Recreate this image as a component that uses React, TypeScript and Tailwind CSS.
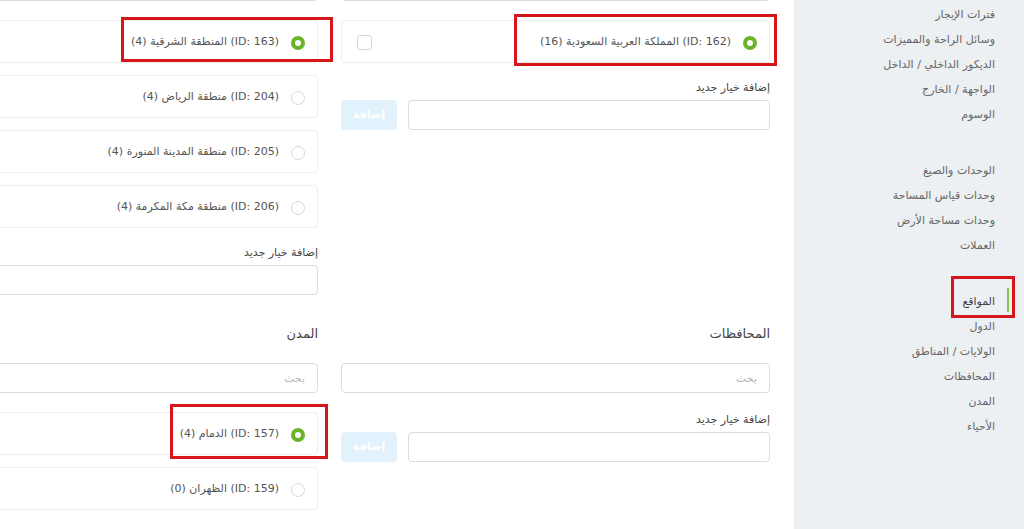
import React from "react";

type Opt = { id: number; name: string; count: number; checked?: boolean };

type Col = {
  title: string;
  options: Opt[];
};

const sideGroups: { label: string; active?: boolean }[][] = [
  [
    { label: "فترات الإيجار" },
    { label: "وسائل الراحة والمميزات" },
    { label: "الديكور الداخلي / الداخل" },
    { label: "الواجهة / الخارج" },
    { label: "الوسوم" },
  ],
  [
    { label: "الوحدات والصيغ" },
    { label: "وحدات قياس المساحة" },
    { label: "وحدات مساحة الأرض" },
    { label: "العملات" },
  ],
  [
    { label: "المواقع", active: true },
    { label: "الدول" },
    { label: "الولايات / المناطق" },
    { label: "المحافظات" },
    { label: "المدن" },
    { label: "الأحياء" },
  ],
];

const cols: Col[] = [
  {
    title: "الدول",
    options: [{ id: 162, name: "المملكة العربية السعودية", count: 16, checked: true }],
  },
  {
    title: "الولايات / المناطق",
    options: [
      { id: 163, name: "المنطقة الشرقية", count: 4, checked: true },
      { id: 204, name: "منطقة الرياض", count: 4 },
      { id: 205, name: "منطقة المدينة المنورة", count: 4 },
      { id: 206, name: "منطقة مكة المكرمة", count: 4 },
    ],
  },
  { title: "المحافظات", options: [] },
  {
    title: "المدن",
    options: [
      { id: 157, name: "الدمام", count: 4, checked: true },
      { id: 159, name: "الظهران", count: 0 },
    ],
  },
];

function Radio({ on }: { on?: boolean }) {
  if (on) {
    return <span className="h-[14px] w-[14px] shrink-0 rounded-full border-[4px] border-[#6ab42a] bg-white" />;
  }
  return <span className="h-[14px] w-[14px] shrink-0 rounded-full border border-[#d9d9d9] bg-white" />;
}

function Column({ col }: { col: Col }) {
  const has = col.options.length > 0;
  return (
    <div className="flex flex-col">
      <div className="h-[20px] text-[13px] leading-[20px] text-[#444]">{col.title}</div>
      <input
        placeholder="بحث"
        className="mt-[19px] h-[30px] rounded-[4px] border border-[#dcdcdc] px-[12px] text-[11px] placeholder:text-[#b5b5b5] outline-none"
      />
      {has && (
        <div className="mt-[19px] flex flex-col gap-[12px]">
          {col.options.map((o) => (
            <div
              key={o.id}
              className="flex h-[43px] items-center rounded-[4px] border border-[#eeeeee] bg-white pl-[15px] pr-[12px] pt-[2px]"
            >
              <Radio on={o.checked} />
              <span className="mr-[12px] whitespace-nowrap text-[11px] text-[#555]">
                {`(ID: ${o.id}) ${o.name} (${o.count})`}
              </span>
              <span className="mr-auto h-[15px] w-[15px] shrink-0 rounded-[3px] border border-[#d6d6d6]" />
            </div>
          ))}
        </div>
      )}
      <div className={has ? "mt-[18px]" : "mt-[20px]"}>
        <div className="mb-[5px] h-[14px] text-[11px] leading-[14px] text-[#444]">إضافة خيار جديد</div>
        <div className="flex gap-[11px]">
          <input className="h-[30px] flex-1 rounded-[4px] border border-[#dcdcdc] px-[12px] text-[11px] outline-none" />
          <button className="h-[30px] w-[56px] rounded-[4px] bg-[#e2f2fc] text-[11px] font-bold text-white">
            إضافة
          </button>
        </div>
      </div>
    </div>
  );
}

export default function App() {
  return (
    <div
      dir="rtl"
      className="relative flex h-[529px] w-[1024px] overflow-hidden bg-white font-['DejaVu_Sans',sans-serif]"
    >
      <aside className="w-[230px] shrink-0 bg-[#edf0f3] pt-[2px] pr-[29px]">
        {sideGroups.map((g, gi) => (
          <div key={gi} className={gi > 0 ? "mt-[31px]" : ""}>
            {g.map((it) => (
              <div key={it.label} className="relative h-[25px] text-[11px] leading-[25px] text-[#666]">
                {it.active && (
                  <span className="absolute -right-[14px] top-[-1px] h-[24px] w-[2px] bg-[#8bc34a]" />
                )}
                <span className={it.active ? "text-[#444]" : ""}>{it.label}</span>
              </div>
            ))}
          </div>
        ))}
      </aside>

      <main className="min-w-0 flex-1 overflow-hidden pr-[24px]">
        <div className="-mt-[68px] grid grid-cols-[429px_429px] gap-x-[23px] gap-y-[29px]">
          {cols.map((c) => (
            <Column key={c.title} col={c} />
          ))}
        </div>
      </main>

      {/* annotation boxes */}
      <div className="pointer-events-none absolute left-[121px] top-[17px] h-[45px] w-[212px] border-[3px] border-[#d7161c]" />
      <div className="pointer-events-none absolute left-[514px] top-[14px] h-[52px] w-[263px] border-[3px] border-[#d7161c]" />
      <div className="pointer-events-none absolute left-[951px] top-[276px] h-[42px] w-[64px] border-[3px] border-[#d7161c]" />
      <div className="pointer-events-none absolute left-[170px] top-[404px] h-[55px] w-[158px] border-[3px] border-[#d7161c]" />
    </div>
  );
}
